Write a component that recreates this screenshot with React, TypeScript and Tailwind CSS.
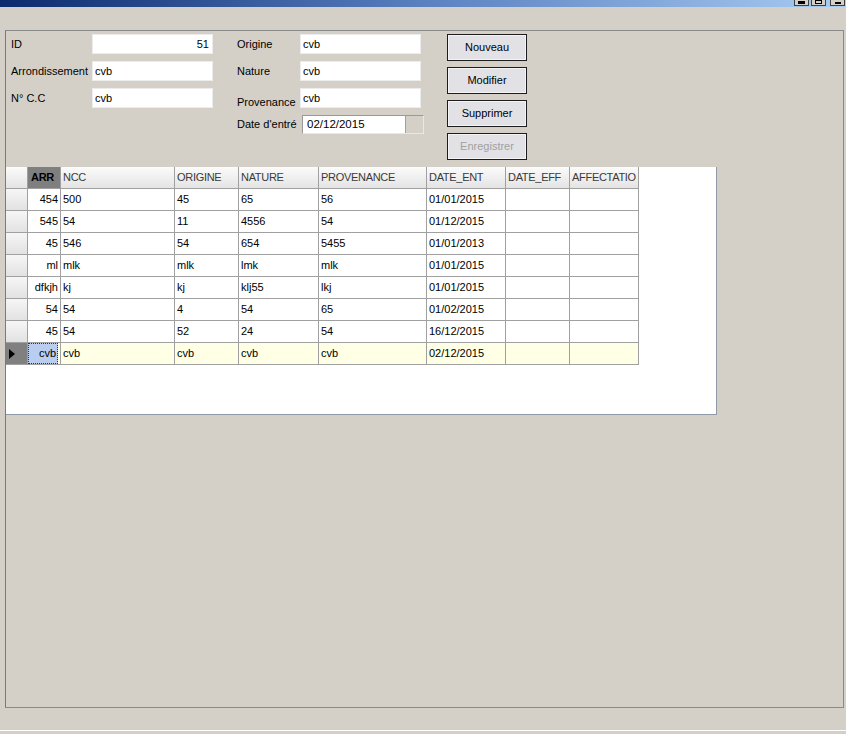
import React from "react";

const cols = [
  { key: "ARR", w: 33, right: true },
  { key: "NCC", w: 114 },
  { key: "ORIGINE", w: 64 },
  { key: "NATURE", w: 80 },
  { key: "PROVENANCE", w: 108 },
  { key: "DATE_ENT", w: 79 },
  { key: "DATE_EFF", w: 64 },
  { key: "AFFECTATIO", w: 69 },
];

const rows: string[][] = [
  ["454", "500", "45", "65", "56", "01/01/2015", "", ""],
  ["545", "54", "11", "4556", "54", "01/12/2015", "", ""],
  ["45", "546", "54", "654", "5455", "01/01/2013", "", ""],
  ["ml", "mlk", "mlk", "lmk", "mlk", "01/01/2015", "", ""],
  ["dfkjh", "kj", "kj", "klj55", "lkj", "01/01/2015", "", ""],
  ["54", "54", "4", "54", "65", "01/02/2015", "", ""],
  ["45", "54", "52", "24", "54", "16/12/2015", "", ""],
  ["cvb", "cvb", "cvb", "cvb", "cvb", "02/12/2015", "", ""],
];

function Field({ value, right }: { value: string; right?: boolean }) {
  return (
    <div
      className={`w-[121px] h-[20px] bg-white border border-[#ececec] flex items-center px-[2px] ${
        right ? "justify-end pr-[3px]" : ""
      }`}
    >
      {value}
    </div>
  );
}

function Btn({ label, disabled }: { label: string; disabled?: boolean }) {
  return (
    <div
      className={`w-[80px] h-[27px] border border-[#1c1c1c] bg-[#e2e2e6] flex items-center justify-center ${
        disabled ? "text-[#a0a0a0]" : "text-black"
      }`}
    >
      <div className="w-full h-full border border-[#f4f4f6] flex items-center justify-center">{label}</div>
    </div>
  );
}

export default function App() {
  return (
    <div
      className="w-[846px] h-[734px] bg-[#d4d0c8] overflow-hidden flex flex-col text-[11px] text-black"
      style={{ fontFamily: '"Liberation Sans", Arial, sans-serif' }}
    >
      {/* title bar */}
      <div className="h-[7px] bg-gradient-to-r from-[#0c2a6e] via-[#5a80c0] to-[#a8ccf2] flex justify-end items-start pr-[1px] gap-[2px] shrink-0">
        <div className="w-[15px] h-[6px] bg-[#d4d0c8] border-l border-r border-b border-[#404040] flex justify-center"><div className="w-[7px] h-[3px] bg-black mt-[1px]" /></div>
        <div className="w-[15px] h-[6px] bg-[#d4d0c8] border-l border-r border-b border-[#404040] flex justify-center"><div className="w-[7px] h-[4px] border border-black" /></div>
        <div className="w-[15px] h-[6px] bg-[#d4d0c8] border-l border-r border-b border-[#404040] ml-[2px] flex justify-center"><div className="w-[6px] h-[4px] border-b-2 border-black" /></div>
      </div>

      <div className="h-[23px] shrink-0" />

      {/* panel */}
      <div className="ml-[5px] w-[839px] h-[678px] border border-[#8a8a8a] border-l-[#7a7a7a] shrink-0 flex flex-col">
        {/* form */}
        <div className="flex h-[136px] pt-[3px]">
          <div className="flex flex-col gap-[7px] pl-[5px] w-[231px]">
            <div className="flex items-center">
              <span className="w-[81px]">ID</span>
              <Field value="51" right />
            </div>
            <div className="flex items-center">
              <span className="w-[81px]">Arrondissement</span>
              <Field value="cvb" />
            </div>
            <div className="flex items-center">
              <span className="w-[81px]">N° C.C</span>
              <Field value="cvb" />
            </div>
          </div>
          <div className="flex flex-col w-[209px]">
            <div className="flex items-center">
              <span className="w-[63px]">Origine</span>
              <Field value="cvb" />
            </div>
            <div className="flex items-center mt-[7px]">
              <span className="w-[63px]">Nature</span>
              <Field value="cvb" />
            </div>
            <div className="flex items-end mt-[7px] h-[20px]">
              <span className="w-[63px] mb-[-2px]">Provenance</span>
              <Field value="cvb" />
            </div>
            <div className="flex items-center mt-[7px]">
              <span className="w-[65px]">Date d'entré</span>
              <div className="w-[122px] h-[19px] bg-white border border-[#9a9a9a] border-b-[#e8e8e8] border-r-[#e8e8e8] flex items-center">
                <span className="flex-1 pl-[4px] text-[11.5px]">02/12/2015</span>
                <div className="w-[18px] h-full bg-[#d4d0c8] border-l border-[#a0a0a0]" />
              </div>
            </div>
          </div>
          <div className="flex flex-col gap-[6px] pl-[1px]">
            <Btn label="Nouveau" />
            <Btn label="Modifier" />
            <Btn label="Supprimer" />
            <Btn label="Enregistrer" disabled />
          </div>
        </div>

        {/* grid */}
        <div className="w-[711px] h-[248px] bg-white border-r border-b border-[#8f9aa8] flex flex-col">
          {/* header */}
          <div className="flex h-[22px]">
            <div className="w-[22px] h-full bg-gradient-to-b from-[#fbfbfb] to-[#e4e4e4] border-r border-b border-[#a0a0a0]" />
            {cols.map((c) => (
              <div
                key={c.key}
                style={{ width: c.w }}
                className={`h-full border-r border-b border-[#a0a0a0] flex items-center pl-[2px] overflow-hidden whitespace-nowrap tracking-[-0.3px] ${
                  c.key === "ARR"
                    ? "bg-[#7f7f7f] font-bold text-black pl-[3px]"
                    : "bg-gradient-to-b from-[#fbfbfb] to-[#e4e4e4] text-[#3a3a3a]"
                }`}
              >
                {c.key}
              </div>
            ))}
          </div>
          {rows.map((r, i) => {
            const last = i === rows.length - 1;
            return (
              <div key={i} className="flex h-[22px]">
                <div
                  className={`w-[22px] h-full border-r border-b border-[#a0a0a0] flex items-center ${
                    last ? "bg-[#808080]" : "bg-gradient-to-b from-[#f6f6f6] to-[#e2e2e2]"
                  }`}
                >
                  {last && (
                    <svg width="8" height="12" viewBox="0 0 8 12" className="ml-[2px]">
                      <path d="M1 1 L7 6 L1 11 Z" fill="#000" />
                    </svg>
                  )}
                </div>
                {cols.map((c, j) => (
                  <div
                    key={c.key}
                    style={{ width: c.w }}
                    className={`h-full border-r border-b border-[#a0a0a0] flex items-center ${
                      c.right ? "justify-end pr-[2px]" : "pl-[2px]"
                    } ${last ? "bg-[#ffffe6]" : ""}`}
                  >
                    {last && j === 0 ? (
                      <div className="w-full h-full bg-[#b8cdef] border border-dotted border-[#333] flex items-center justify-end pr-[1px]">
                        {r[j]}
                      </div>
                    ) : (
                      r[j]
                    )}
                  </div>
                ))}
              </div>
            );
          })}
        </div>
      </div>

      <div className="h-[22px] shrink-0" />
      <div className="h-[1px] bg-white shrink-0" />
    </div>
  );
}
